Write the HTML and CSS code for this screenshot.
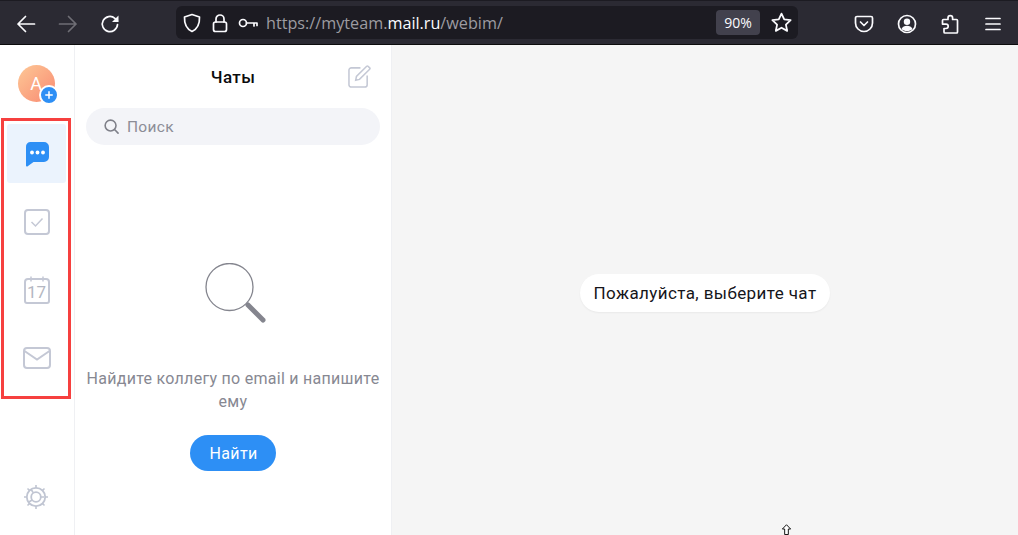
FILE: index.html
```html
<!DOCTYPE html>
<html lang="ru">

<head>
  <meta charset="UTF-8">
  <title>Myteam</title>
  <link rel="stylesheet" href="styles.css">
</head>

<body>
  <!-- browser toolbar -->
  <header class="toolbar">
    <div class="nav-btns">
      <svg class="tb-icon" viewBox="0 0 20 20"><path d="M18.5 10H2M9.5 2.5 2 10l7.500 7.500" /></svg>
      <svg class="tb-icon dim" viewBox="0 0 20 20"><path d="M1.500 10H18M10.500 2.500 18 10l-7.500 7.500" /></svg>
      <svg class="tb-icon" viewBox="0 0 20 20"><path d="M17.500 10.500a7.600 7.600 0 1 1-2.600-6.200L17.500 7" /><path class="solid" d="M18.500 1.500v6.500H12z" /></svg>
    </div>
    <div class="urlbar">
      <svg class="url-icon" viewBox="0 0 20 20"><path d="M10 1.500 17.500 4c.3 7-1.800 11.800-7.500 14.500C4.300 15.800 2.200 11 2.500 4z" /></svg>
      <svg class="url-icon" viewBox="0 0 20 20"><rect x="3.500" y="9" width="13" height="9.500" rx="2" /><path d="M6 9V6a4 4 0 0 1 8 0v3" /></svg>
      <svg class="url-icon key" viewBox="0 0 20 20"><circle cx="5" cy="10" r="3.500" /><path d="M8.500 10H19M16 10v3M19 10v2.500" /></svg>
      <div class="url-text">https://myteam.<b>mail.ru</b>/webim/</div>
      <div class="zoom-badge">90%</div>
      <svg class="tb-icon star" viewBox="0 0 20 20"><path d="m10 1.500 2.600 5.600 6.100.7-4.500 4.200 1.200 6L10 15l-5.400 3 1.200-6-4.500-4.200 6.100-.7z" /></svg>
    </div>
    <div class="tool-btns">
      <svg class="tb-icon" viewBox="0 0 20 20"><path d="M3 2.500h14a1.500 1.500 0 0 1 1.500 1.500v5a8.500 8.500 0 0 1-17 0V4A1.500 1.500 0 0 1 3 2.500z" /><path d="m6.500 8 3.500 3.500L13.500 8" /></svg>
      <svg class="tb-icon" viewBox="0 0 20 20"><circle cx="10" cy="10" r="8.500" /><circle class="solid" cx="10" cy="7.800" r="3.200" /><path class="solid" d="M4.500 15c1-2.500 3-3.300 5.500-3.300s4.500.8 5.500 3.300c-1.500 1.500-3.400 2-5.500 2s-4-.5-5.500-2z" /></svg>
      <svg class="tb-icon" viewBox="0 0 20 20"><path d="M8 5.500V4a2.300 2.300 0 0 1 4.600 0v1.500h3.900a1 1 0 0 1 1 1V18a1 1 0 0 1-1 1H5a1 1 0 0 1-1-1v-3.500h2a2.200 2.200 0 0 0 0-4.400H2.500V6.500a1 1 0 0 1 1-1z" /></svg>
      <svg class="tb-icon" viewBox="0 0 20 20"><path d="M3 4.500h14M3 10h14M3 15.500h14" /></svg>
    </div>
  </header>

  <div class="app">
    <!-- left rail -->
    <nav class="rail">
      <div class="avatar">
        <span>A</span>
        <div class="avatar-plus">
          <svg viewBox="0 0 12 12"><path d="M6 1.500v9M1.500 6h9" /></svg>
        </div>
      </div>
      <div class="rail-item active">
        <svg class="chat-icon" viewBox="0 0 26 26"><path d="M6 1h14a5 5 0 0 1 5 5v10a5 5 0 0 1-5 5H9.500l-5.800 4.300c-.8.500-1.700 0-1.700-.9V6a5 5 0 0 1 4-5z" /><circle cx="8" cy="11.500" r="1.900" /><circle cx="13.500" cy="11.500" r="1.900" /><circle cx="19" cy="11.500" r="1.900" /></svg>
      </div>
      <div class="rail-item">
        <svg class="rail-icon" viewBox="0 0 26 26"><rect x="1" y="1" width="24" height="24" rx="3" /><path class="thin" d="m7.500 13 4 4 7-7.500" /></svg>
      </div>
      <div class="rail-item">
        <div class="cal">
          <svg class="rail-icon" viewBox="0 0 26 28"><path d="M4 3h18a3 3 0 0 1 3 3v19a2 2 0 0 1-2 2H3a2 2 0 0 1-2-2V6a3 3 0 0 1 3-3z" /><path class="thin" d="M7 .5v5M19 .5v5" /></svg>
          <span class="cal-num">17</span>
        </div>
      </div>
      <div class="rail-item">
        <svg class="rail-icon mail" viewBox="0 0 28 22"><rect x="1" y="1" width="26" height="20" rx="3" /><path d="m1.500 4 12.500 8.500L26.500 4" /></svg>
      </div>
      <div class="rail-bottom">
        <svg class="gear" viewBox="0 0 26 26">
          <circle cx="13" cy="13" r="9.200" />
          <circle cx="13" cy="13" r="4.800" />
          <path class="thin" d="M13 1v3M13 22v3M1 13h3M22 13h3M4.500 4.500l2 2M19.500 19.500l2 2M4.500 21.500l2-2M19.500 6.500l2-2M10 8.500 8 5M9 16l-3 2M17.800 13H21" />
        </svg>
      </div>
    </nav>

    <!-- chat list -->
    <section class="list">
      <div class="list-head">
        <h2>Чаты</h2>
        <svg class="compose" viewBox="0 0 24 24"><path d="M13 3H3.500A2.500 2.500 0 0 0 1 5.500v15A2.500 2.500 0 0 0 3.500 23h14a2.500 2.500 0 0 0 2.500-2.500V11" /><path d="m8 16 .8-4L19.500 1.300c.5-.4 1-.4 1.400 0l1.700 1.700c.4.400.4 1 0 1.400L12 15z" /></svg>
      </div>
      <div class="search">
        <svg viewBox="0 0 16 16"><circle cx="7" cy="7" r="5.800" /><path d="m11.500 11.500 3.500 3.500" /></svg>
        <span>Поиск</span>
      </div>
      <div class="empty">
        <svg class="empty-icon" viewBox="0 0 62 60"><circle cx="24.500" cy="24" r="23.500" /><path class="handle" d="m43 42 15 15" /></svg>
        <p>Найдите коллегу по email и напишите ему</p>
        <button class="btn-find">Найти</button>
      </div>
    </section>

    <!-- main area -->
    <main class="main">
      <div class="pill">Пожалуйста, выберите чат</div>
      <svg class="cursor" viewBox="0 0 11 12"><path d="M5.500 .8 10 5.500H7.500V11.500h-4V5.500H1z" /></svg>
    </main>

    <!-- red annotation frame -->
    <div class="frame"></div>
  </div>
</body>

</html>
```

FILE: styles.css
```css
* {
  margin: 0;
  padding: 0;
  box-sizing: border-box;
}

html,
body {
  height: 100%;
  overflow: hidden;
}

body {
  display: flex;
  flex-direction: column;
  background: #fff;
  font-family: Roboto, "Liberation Sans", sans-serif;
}

/* browser toolbar */
.toolbar {
  height: 45px;
  flex: none;
  display: flex;
  align-items: flex-start;
  background: #2b2a33;
  border-top: 1px solid #1c1b22;
  border-bottom: 1px solid #0c0c0d;
}

.tb-icon,
.url-icon {
  fill: none;
  stroke: #fbfbfe;
  stroke-width: 1.700;
  stroke-linecap: round;
  stroke-linejoin: round;
  flex: none;
}

.tb-icon {
  width: 20px;
  height: 20px;
}

.tb-icon .solid {
  fill: #fbfbfe;
  stroke: none;
}

.tb-icon.dim {
  stroke: #6f6e75;
}

.nav-btns {
  width: 176px;
  padding: 13px 0 0 16px;
  display: flex;
  gap: 22px;
  flex: none;
}

.urlbar {
  width: 622px;
  height: 33px;
  margin-top: 5px;
  padding: 0 6px 0 6px;
  display: flex;
  align-items: center;
  background: #1c1b22;
  border-radius: 6px;
  flex: none;
}

.url-icon {
  width: 20px;
  height: 20px;
  margin-right: 8px;
}

.url-icon.key {
  margin-right: 8px;
}

.url-text {
  font-family: "Open Sans", "Liberation Sans", sans-serif;
  font-size: 16.200px;
  color: #9d9ca1;
  white-space: nowrap;
  flex: 1;
}

.url-text b {
  font-weight: 400;
  color: #fbfbfe;
}

.zoom-badge {
  width: 44px;
  height: 25px;
  line-height: 26px;
  text-align: center;
  background: #42414d;
  border-radius: 4px;
  color: #fbfbfe;
  font-family: "Open Sans", "Liberation Sans", sans-serif;
  font-size: 14px;
  margin-right: 11px;
}

.star {
  width: 21px;
  height: 21px;
}

.tool-btns {
  flex: 1;
  padding: 13px 0 0 56px;
  display: flex;
  gap: 23px;
}

/* app */
.app {
  flex: 1;
  display: flex;
  position: relative;
  min-height: 0;
}

.rail {
  width: 75px;
  flex: none;
  border-right: 1px solid #eff0f3;
  display: flex;
  flex-direction: column;
  align-items: center;
  padding: 20px 0 0 0;
  background: #fff;
}

.avatar {
  width: 37px;
  height: 37px;
  margin-right: 2px;
  margin-bottom: 22px;
  border-radius: 50%;
  background: linear-gradient(135deg, #fdc896 0%, #f98a72 100%);
  color: #fff;
  font-size: 18px;
  line-height: 38px;
  text-align: center;
  position: relative;
}

.avatar-plus {
  position: absolute;
  right: -4px;
  bottom: -3px;
  width: 20px;
  height: 20px;
  border-radius: 50%;
  background: #2d8ff5;
  border: 2px solid #fff;
  display: flex;
  align-items: center;
  justify-content: center;
}

.avatar-plus svg {
  width: 10px;
  height: 10px;
  fill: none;
  stroke: #fff;
  stroke-width: 1.800;
}

.rail-item {
  width: 59px;
  height: 59px;
  margin-right: 2px;
  margin-bottom: 9px;
  padding-left: 1px;
  border-radius: 3px;
  display: flex;
  align-items: center;
  justify-content: center;
}

.rail-item.active {
  background: #ebf3fd;
}

.chat-icon {
  width: 26px;
  height: 26px;
  fill: #2d8ff5;
}

.chat-icon circle {
  fill: #fff;
}

.rail-icon {
  width: 26px;
  height: 26px;
  fill: none;
  stroke: #c4c8d5;
  stroke-width: 2;
}

.rail-icon .thin {
  stroke-width: 1.500;
}

.rail-icon.mail {
  width: 28px;
  height: 22px;
}

.cal {
  position: relative;
  height: 28px;
}

.cal .rail-icon {
  height: 28px;
  display: block;
}

.cal-num {
  position: absolute;
  left: 0;
  right: 0;
  top: 8px;
  text-align: center;
  font-size: 17px;
  line-height: 17px;
  color: #b4b7c2;
}

.rail-bottom {
  margin-top: auto;
  margin-right: 2px;
  margin-bottom: 25px;
}

.gear {
  display: block;
  width: 26px;
  height: 26px;
  fill: none;
  stroke: #c0c5d2;
  stroke-width: 1.800;
}

.gear .thin {
  stroke-width: 1.600;
}

/* chat list */
.list {
  width: 317px;
  flex: none;
  border-right: 1px solid #eff0f3;
  display: flex;
  flex-direction: column;
  background: #fff;
}

.list-head {
  height: 63px;
  flex: none;
  position: relative;
  display: flex;
  align-items: center;
  justify-content: center;
}

.list-head h2 {
  font-size: 17px;
  font-weight: 500;
  color: #0b0b0d;
  letter-spacing: .4px;
}

.compose {
  position: absolute;
  right: 20px;
  top: 20px;
  width: 23px;
  height: 23px;
  fill: none;
  stroke: #c4c8d5;
  stroke-width: 1.600;
}

.search {
  height: 37px;
  margin: 0 11px;
  padding-left: 18px;
  border-radius: 19px;
  background: #f3f4f8;
  display: flex;
  align-items: center;
  gap: 8px;
  flex: none;
  font-size: 15.500px;
  color: #8c8d97;
  letter-spacing: .3px;
}

.search svg {
  width: 15px;
  height: 15px;
  fill: none;
  stroke: #7f8089;
  stroke-width: 1.700;
  stroke-linecap: round;
}

.empty {
  display: flex;
  flex-direction: column;
  align-items: center;
  padding-top: 118px;
}

.empty-icon {
  width: 62px;
  height: 60px;
  margin-left: 5px;
  margin-bottom: 44px;
  fill: none;
  stroke: #84858e;
  stroke-width: 1.300;
}

.empty-icon .handle {
  stroke-width: 5;
  stroke-linecap: round;
}

.empty p {
  width: 300px;
  font-size: 16px;
  line-height: 23px;
  color: #878892;
  text-align: center;
  letter-spacing: .28px;
  margin-bottom: 22px;
}

.btn-find {
  width: 86px;
  height: 36px;
  padding-left: 1px;
  border: none;
  border-radius: 18px;
  background: #2d8ff5;
  color: #fff;
  font-family: inherit;
  font-size: 16px;
  font-weight: 400;
  letter-spacing: .35px;
}

/* main */
.main {
  flex: 1;
  background: #f5f5f5;
  position: relative;
  display: flex;
  justify-content: center;
  align-items: flex-start;
  padding: 229px 0 0 0;
}

.pill {
  height: 38px;
  line-height: 38px;
  padding: 0 14px;
  background: #fff;
  border-radius: 19px;
  box-shadow: 0 1px 2px rgba(0, 0, 0, 0.05);
  font-size: 17px;
  color: #15151a;
  letter-spacing: .4px;
}

.cursor {
  position: absolute;
  left: 389px;
  bottom: 0;
  width: 11px;
  height: 11px;
  fill: #fff;
  stroke: #000;
  stroke-width: 1;
}

/* red annotation */
.frame {
  position: absolute;
  left: 1px;
  top: 73px;
  width: 70px;
  height: 281px;
  border: 3px solid #f6403f;
  pointer-events: none;
}
```
